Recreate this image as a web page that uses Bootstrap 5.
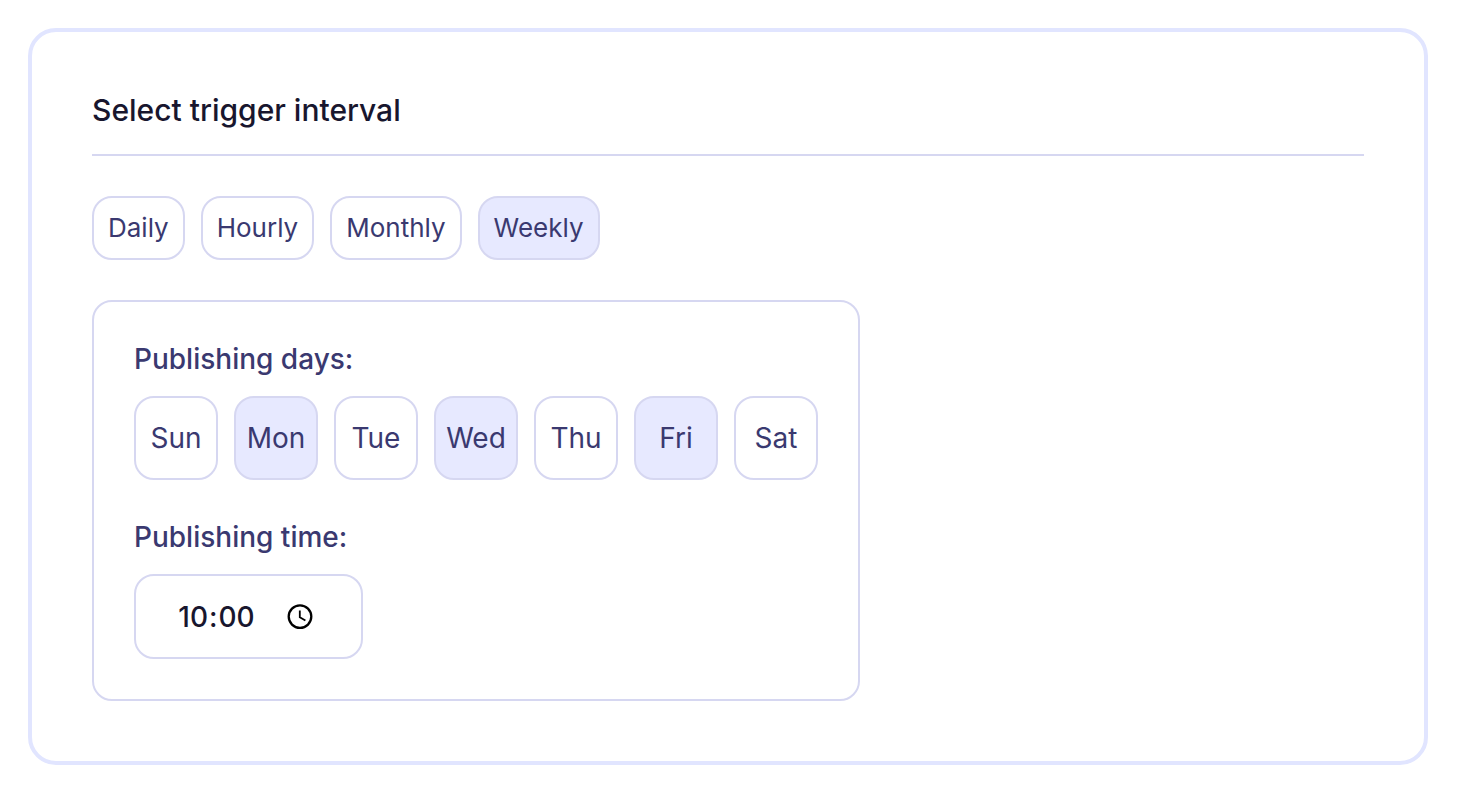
<!DOCTYPE html>
<html lang="en">
<head>
<meta charset="utf-8">
<meta name="viewport" content="width=device-width, initial-scale=1">
<title>Select trigger interval</title>
<link href="https://cdn.jsdelivr.net/npm/bootstrap@5.3.0/dist/css/bootstrap.min.css" rel="stylesheet">
<style>
  :root { --ink: #18162e; --indigo: #3a3970; --line: #d6d7f1; --fill: #e7e9ff; }
  body { font-family: Inter, sans-serif; color: var(--ink); background: #fff; }
  .page { padding: 28px 48px 40px 28px; }
  .panel { border: 4px solid #e1e5ff; border-radius: 28px; padding: 60px; }
  .panel-title { font-size: 30px; line-height: 36px; font-weight: 500; padding-bottom: 26px; border-bottom: 2px solid var(--line); }
  .stack-wide { gap: 40px; }
  .pill { --bs-btn-color: var(--indigo); --bs-btn-bg: #fff; --bs-btn-border-color: var(--line);
    --bs-btn-hover-color: var(--indigo); --bs-btn-hover-bg: #f5f5ff; --bs-btn-hover-border-color: var(--line);
    --bs-btn-active-color: var(--indigo); --bs-btn-active-bg: var(--fill); --bs-btn-active-border-color: var(--line);
    --bs-btn-border-width: 2px; --bs-btn-border-radius: 20px; --bs-btn-font-size: 26px; --bs-btn-line-height: 32px;
    --bs-btn-padding-x: 14px; --bs-btn-padding-y: 14px; }
  .day { --bs-btn-font-size: 28px; --bs-btn-padding-x: 0; width: 84px; height: 84px; }
  .schedule { border: 2px solid var(--line); border-radius: 20px; padding: 40px; max-width: 100%; }
  .field-label { font-size: 28px; line-height: 34px; font-weight: 500; color: var(--indigo); margin-bottom: 20px; }
  .time-box { border: 2px solid var(--line); border-radius: 20px; width: 229px; height: 85px; padding: 0 45px 0 40px;
    font-size: 28px; line-height: 34px; font-weight: 500; }
  .time-box input { font-weight: 500; color: var(--ink); width: 36px; outline: 0; text-align: left; }
  .time-box .hour { width: 32px; text-align: right; }
  .time-fields { gap: 1px; }
</style>
</head>
<body>
<main class="page">
  <section class="panel d-flex flex-column stack-wide">
    <h1 class="panel-title mb-0">Select trigger interval</h1>
    <div class="d-flex flex-wrap gap-3" role="group" aria-label="Trigger interval">
      <button type="button" class="btn pill">Daily</button>
      <button type="button" class="btn pill">Hourly</button>
      <button type="button" class="btn pill">Monthly</button>
      <button type="button" class="btn pill active" aria-pressed="true">Weekly</button>
    </div>
    <form class="schedule d-flex flex-column align-self-start stack-wide">
      <div role="group" aria-labelledby="days-label">
        <div class="field-label" id="days-label">Publishing days:</div>
        <div class="d-flex flex-wrap gap-3">
          <button type="button" class="btn pill day" data-bs-toggle="button">Sun</button>
          <button type="button" class="btn pill day active" data-bs-toggle="button" aria-pressed="true">Mon</button>
          <button type="button" class="btn pill day" data-bs-toggle="button">Tue</button>
          <button type="button" class="btn pill day active" data-bs-toggle="button" aria-pressed="true">Wed</button>
          <button type="button" class="btn pill day" data-bs-toggle="button">Thu</button>
          <button type="button" class="btn pill day active" data-bs-toggle="button" aria-pressed="true">Fri</button>
          <button type="button" class="btn pill day" data-bs-toggle="button">Sat</button>
        </div>
      </div>
      <div>
        <label class="field-label d-block" for="publish-hour">Publishing time:</label>
        <div class="time-box d-flex align-items-center justify-content-between">
          <div class="time-fields d-flex">
            <input type="text" id="publish-hour" class="hour border-0 bg-transparent p-0" value="10" maxlength="2" inputmode="numeric">
            <span>:</span>
            <input type="text" class="border-0 bg-transparent p-0" value="00" maxlength="2" inputmode="numeric" aria-label="Publishing time, minutes">
          </div>
          <button type="button" class="btn border-0 p-0 d-flex" aria-label="Choose time">
            <svg width="32" height="32" viewBox="0 0 32 32" fill="none" stroke="#000" aria-hidden="true">
              <circle cx="16" cy="15.6" r="11.3" stroke-width="2.3"/>
              <path d="M15.8 9.4v6.8l5.6 3.4" stroke-width="1.8"/>
            </svg>
          </button>
        </div>
      </div>
    </form>
  </section>
</main>
<script src="https://cdn.jsdelivr.net/npm/bootstrap@5.3.0/dist/js/bootstrap.bundle.min.js"></script>
</body>
</html>
